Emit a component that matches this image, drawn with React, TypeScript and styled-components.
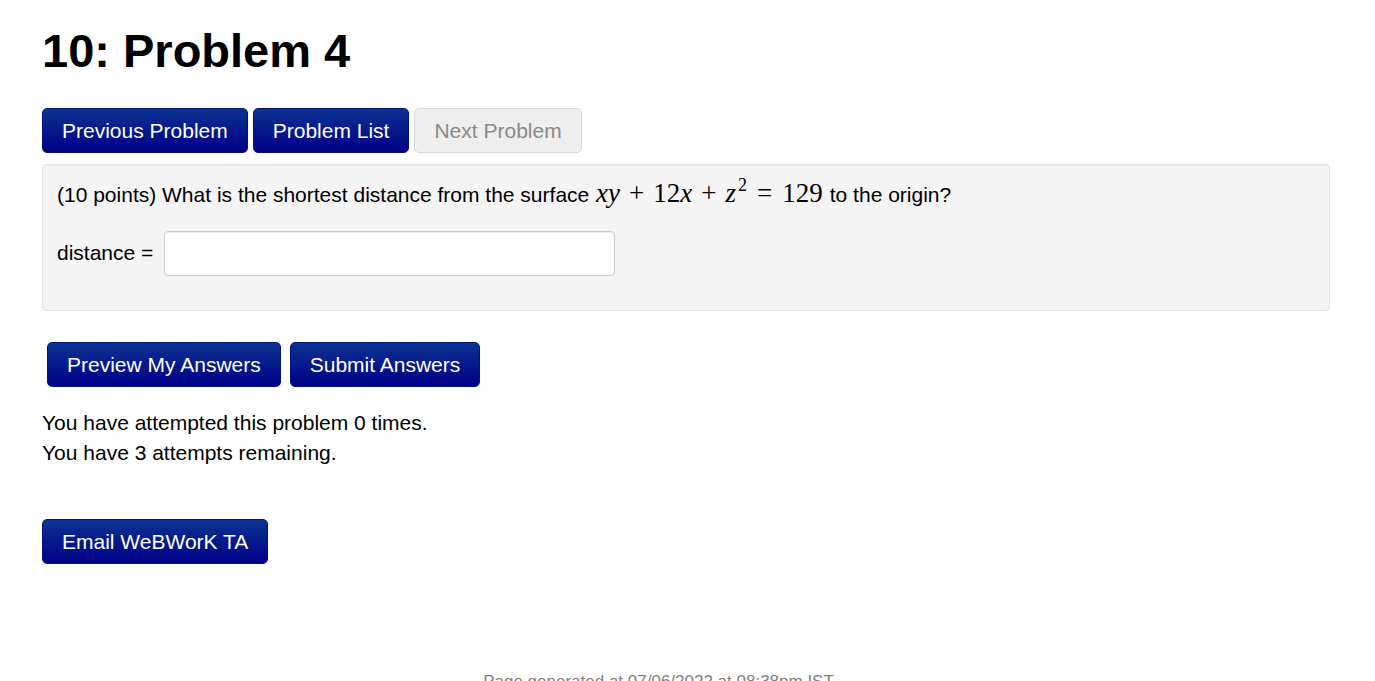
import React from "react";
import styled, { createGlobalStyle } from "styled-components";

const Global = createGlobalStyle`
  html, body {
    margin: 0;
    padding: 0;
    background: #ffffff;
    overflow: hidden;
  }
  body {
    font-family: "Liberation Sans", Arial, sans-serif;
    font-size: 21px;
    line-height: 30px;
    color: #000000;
  }
`;

const Page = styled.div`
  padding: 24px 45px 0 42px;
`;

const Title = styled.h1`
  margin: 0;
  font-size: 47px;
  line-height: 53px;
  font-weight: 700;
`;

const ButtonRow = styled.div<{ $top: number; $gap: number; $indent?: number }>`
  display: flex;
  align-items: flex-start;
  margin-top: ${(p) => p.$top}px;
  gap: ${(p) => p.$gap}px;
  padding-left: ${(p) => p.$indent ?? 0}px;
`;

const Button = styled.button<{ $muted?: boolean }>`
  box-sizing: border-box;
  height: 45px;
  padding: 0 19px;
  border-radius: 5px;
  font-family: "Liberation Sans", Arial, sans-serif;
  font-size: 21px;
  line-height: 43px;
  white-space: nowrap;
  cursor: ${(p) => (p.$muted ? "default" : "pointer")};
  color: ${(p) => (p.$muted ? "#8a8a8a" : "#ffffff")};
  border: 1px solid ${(p) => (p.$muted ? "#dadada" : "#02137a")};
  background: ${(p) =>
    p.$muted ? "#eeeeee" : "linear-gradient(to bottom, #0c3391 0%, #000088 100%)"};
`;

const ProblemBox = styled.div`
  margin-top: 11px;
  padding: 15px 14px 34px;
  background: #f4f4f4;
  border: 1px solid #e3e3e3;
  border-radius: 4px;
  box-shadow: inset 0 1px 1px rgba(0, 0, 0, 0.04);
`;

const Statement = styled.div`
  line-height: 30px;
`;

const Math = styled.span`
  font-family: "Liberation Serif", "Times New Roman", serif;
  font-size: 27px;
  line-height: 0;
  white-space: nowrap;
  margin: 0 7px 0 1px;
`;

const Var = styled.i`
  font-style: italic;
`;

const Op = styled.span<{ $space: number }>`
  margin: 0 ${(p) => p.$space}px;
`;

const Sup = styled.span`
  font-size: 18px;
  line-height: 0;
  vertical-align: 0.62em;
  margin-left: 2px;
`;

const AnswerRow = styled.div`
  display: flex;
  align-items: flex-start;
  gap: 11px;
  margin-top: 21px;
`;

const Label = styled.span`
  margin-top: 7px;
`;

const AnswerInput = styled.input`
  box-sizing: border-box;
  width: 451px;
  height: 45px;
  margin: 0;
  padding: 4px 10px;
  background: #ffffff;
  border: 1px solid #cccccc;
  border-radius: 4px;
  box-shadow: inset 0 1px 1px rgba(0, 0, 0, 0.075);
  font-family: "Liberation Sans", Arial, sans-serif;
  font-size: 21px;
`;

const Attempts = styled.div`
  margin-top: 21px;
`;

const Footer = styled.div`
  margin-top: 106px;
  padding-right: 58px;
  text-align: center;
  font-size: 17px;
  line-height: 24px;
  color: #808080;
`;

export default function App() {
  return (
    <>
      <Global />
      <Page>
        <Title>10: Problem 4</Title>
        <ButtonRow $top={31} $gap={5}>
          <Button>Previous Problem</Button>
          <Button>Problem List</Button>
          <Button $muted disabled>
            Next Problem
          </Button>
        </ButtonRow>
        <ProblemBox>
          <Statement>
            (10 points) What is the shortest distance from the surface{" "}
            <Math>
              <Var>xy</Var>
              <Op $space={9}>+</Op>12<Var>x</Var>
              <Op $space={9}>+</Op>
              <Var>z</Var>
              <Sup>2</Sup>
              <Op $space={10}>=</Op>129
            </Math>
            to the origin?
          </Statement>
          <AnswerRow>
            <Label>distance =</Label>
            <AnswerInput type="text" aria-label="distance" />
          </AnswerRow>
        </ProblemBox>
        <ButtonRow $top={31} $gap={9} $indent={5}>
          <Button>Preview My Answers</Button>
          <Button>Submit Answers</Button>
        </ButtonRow>
        <Attempts>
          You have attempted this problem 0 times.
          <br />
          You have 3 attempts remaining.
        </Attempts>
        <ButtonRow $top={51} $gap={5}>
          <Button>Email WeBWorK TA</Button>
        </ButtonRow>
      </Page>
      <Footer>Page generated at 07/06/2022 at 08:38pm IST</Footer>
    </>
  );
}
